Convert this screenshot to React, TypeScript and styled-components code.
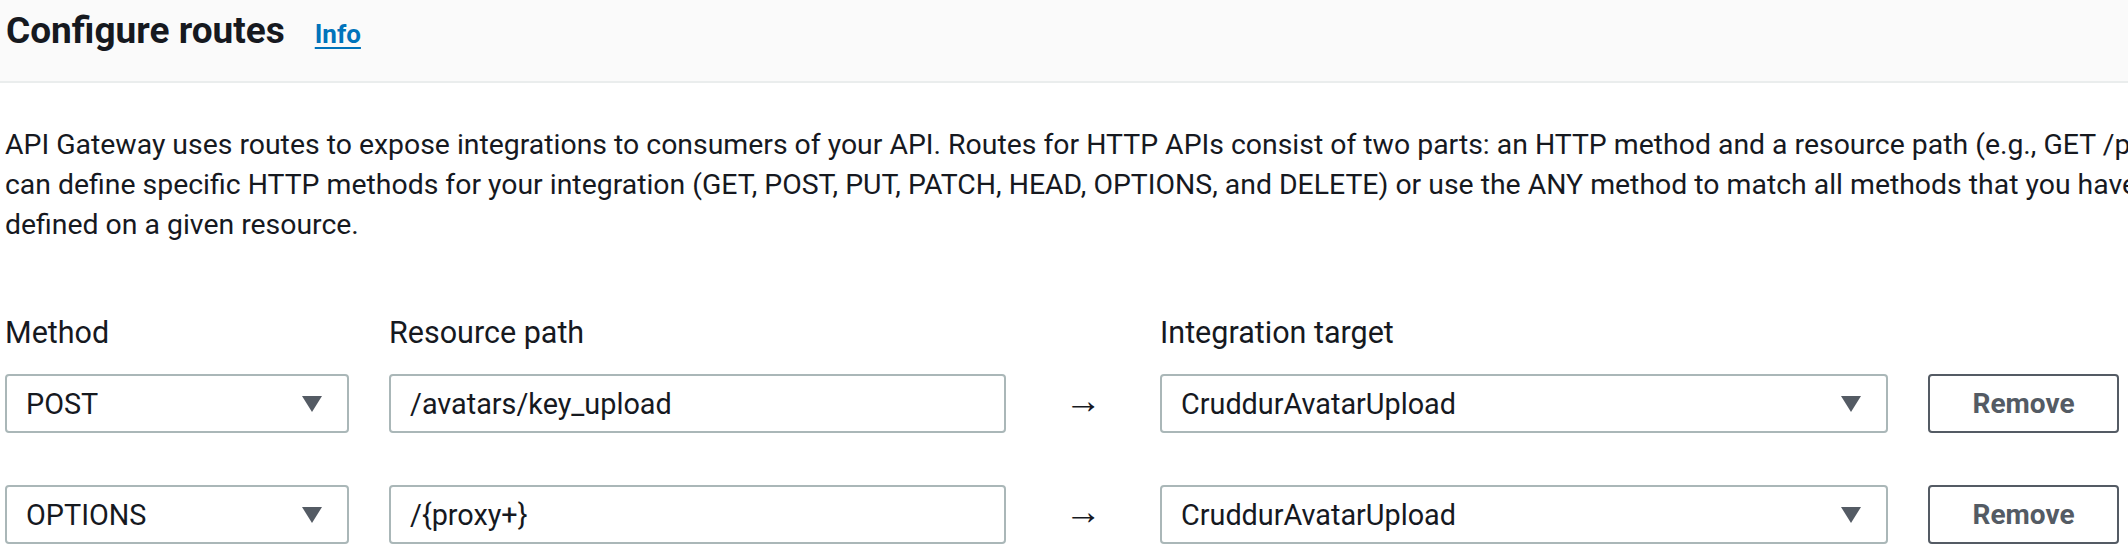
import React from "react";
import styled, { createGlobalStyle } from "styled-components";

const GlobalStyle = createGlobalStyle`
  html, body {
    margin: 0;
    padding: 0;
    overflow: hidden;
    background: #ffffff;
  }
  body {
    font-family: Roboto, "Liberation Sans", Arial, sans-serif;
    color: #16191f;
    -webkit-font-smoothing: antialiased;
  }
`;

const Page = styled.div`
  width: 2128px;
  display: flex;
  flex-direction: column;
`;

const Header = styled.header`
  height: 83px;
  box-sizing: border-box;
  background: #fafafa;
  border-bottom: 2px solid #eaeded;
  padding: 9px 0 0 6px;
  display: flex;
  align-items: baseline;
  gap: 30px;
`;

const Title = styled.h2`
  margin: 0;
  font-size: 37px;
  line-height: 44px;
  font-weight: 700;
  color: #16191f;
`;

const InfoLink = styled.a`
  font-size: 26px;
  line-height: 44px;
  font-weight: 700;
  color: #0073bb;
  text-decoration: underline;
  text-decoration-thickness: 2px;
  text-underline-offset: 4px;
  cursor: pointer;
`;

const Body = styled.div`
  padding: 42px 0 0 5px;
  display: flex;
  flex-direction: column;
`;

const Description = styled.p`
  margin: 0;
  font-size: 28.4px;
  line-height: 40px;
  white-space: nowrap;
  color: #16191f;
`;

const RouteGrid = styled.div`
  margin-top: 68px;
  display: grid;
  grid-template-columns: 344px 617px 74px 728px 191px;
  column-gap: 40px;
  row-gap: 52px;
  align-items: center;
`;

const LabelRow = styled.div`
  display: contents;
`;

const Label = styled.div`
  font-size: 30.5px;
  line-height: 40px;
  color: #16191f;
  margin-bottom: -31px;
`;

const Field = styled.div`
  height: 59px;
  box-sizing: border-box;
  border: 2px solid #aab7b8;
  border-radius: 4px;
  background: #ffffff;
  display: flex;
  align-items: center;
  padding: 0 25px 0 19px;
  font-size: 28.8px;
  color: #16191f;
  white-space: nowrap;
  overflow: hidden;
`;

const FieldValue = styled.span`
  flex: 1;
`;

const Caret = styled.svg`
  width: 20px;
  height: 16px;
  flex: none;
  fill: #545b64;
`;

const Arrow = styled.div`
  font-family: "Liberation Sans", "DejaVu Sans", sans-serif;
  font-size: 37px;
  line-height: 40px;
  text-align: center;
  color: #16191f;
  margin-top: -6px;
`;

const RemoveButton = styled.button`
  height: 59px;
  box-sizing: border-box;
  border: 2px solid #545b64;
  border-radius: 4px;
  background: #ffffff;
  color: #545b64;
  font-family: Roboto, "Liberation Sans", Arial, sans-serif;
  font-size: 28px;
  font-weight: 700;
  cursor: pointer;
  padding: 0;
`;

const Select: React.FC<{ value: string }> = ({ value }) => (
  <Field>
    <FieldValue>{value}</FieldValue>
    <Caret viewBox="0 0 20 16">
      <polygon points="0,0 20,0 10,16" />
    </Caret>
  </Field>
);

const routes = [
  { method: "POST", path: "/avatars/key_upload", target: "CruddurAvatarUpload" },
  { method: "OPTIONS", path: "/{proxy+}", target: "CruddurAvatarUpload" },
];

export default function App() {
  return (
    <>
      <GlobalStyle />
      <Page>
        <Header>
          <Title>Configure routes</Title>
          <InfoLink>Info</InfoLink>
        </Header>
        <Body>
          <Description>
            API Gateway uses routes to expose integrations to consumers of your API. Routes for HTTP APIs consist of two parts: an HTTP method and a resource path (e.g., GET /pets). You
            <br />
            can define specific HTTP methods for your integration (GET, POST, PUT, PATCH, HEAD, OPTIONS, and DELETE) or use the ANY method to match all methods that you haven't
            <br />
            defined on a given resource.
          </Description>
          <RouteGrid>
            <LabelRow>
              <Label>Method</Label>
              <Label>Resource path</Label>
              <span />
              <Label>Integration target</Label>
              <span />
            </LabelRow>
            {routes.map((r, i) => (
              <React.Fragment key={i}>
                <Select value={r.method} />
                <Field>
                  <FieldValue>{r.path}</FieldValue>
                </Field>
                <Arrow>→</Arrow>
                <Select value={r.target} />
                <RemoveButton>Remove</RemoveButton>
              </React.Fragment>
            ))}
          </RouteGrid>
        </Body>
      </Page>
    </>
  );
}
